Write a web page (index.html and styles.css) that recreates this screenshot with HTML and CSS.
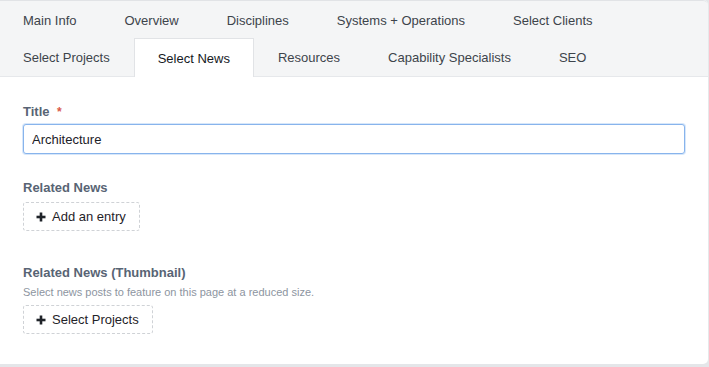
FILE: index.html
```html
<!DOCTYPE html>
<html>
<head>
<meta charset="utf-8">
<link rel="stylesheet" href="styles.css">
</head>
<body>
<div class="card">
  <nav class="tabs">
    <div class="tab-row">
      <a class="tab">Main Info</a>
      <a class="tab">Overview</a>
      <a class="tab">Disciplines</a>
      <a class="tab">Systems + Operations</a>
      <a class="tab">Select Clients</a>
    </div>
    <div class="tab-row">
      <a class="tab">Select Projects</a>
      <a class="tab active">Select News</a>
      <a class="tab">Resources</a>
      <a class="tab">Capability Specialists</a>
      <a class="tab">SEO</a>
    </div>
  </nav>
  <div class="content">
    <div class="field field-title">
      <label class="label">Title <span class="req">*</span></label>
      <input class="text-input" type="text" value="Architecture">
    </div>
    <div class="field field-news">
      <label class="label">Related News</label>
      <button class="add-btn"><svg class="plus" width="10" height="10" viewBox="0 0 10 10"><rect x="3.7" y="0.5" width="2.6" height="9" fill="#1f2329"/><rect x="0.5" y="3.7" width="9" height="2.6" fill="#1f2329"/></svg>Add an entry</button>
    </div>
    <div class="field field-thumb">
      <label class="label">Related News (Thumbnail)</label>
      <p class="instructions">Select news posts to feature on this page at a reduced size.</p>
      <button class="add-btn"><svg class="plus" width="10" height="10" viewBox="0 0 10 10"><rect x="3.7" y="0.5" width="2.6" height="9" fill="#1f2329"/><rect x="0.5" y="3.7" width="9" height="2.6" fill="#1f2329"/></svg>Select Projects</button>
    </div>
  </div>
</div>
</body>
</html>
```
FILE: styles.css
```css
* { box-sizing: border-box; }
html, body { margin: 0; padding: 0; }
body {
  background: #e4e6e9;
  font-family: "Liberation Sans", Arial, sans-serif;
  font-size: 13px;
  color: #29323d;
  width: 709px;
  height: 367px;
  overflow: hidden;
}
.card {
  width: 708px;
  height: 364px;
  background: #fff;
  border-radius: 0 5px 5px 0;
  overflow: hidden;
  box-shadow: 1px 0 0 #e6e8ea;
}
.tabs {
  background: #f4f5f6;
  border-top: 1px solid #e1e3e6;
  border-bottom: 1px solid #e6e8eb;
  border-radius: 0 5px 0 0;
}
.tab-row {
  display: flex;
  height: 37px;
}
.tab-row + .tab-row { height: 38px; }
.tab {
  display: flex;
  align-items: center;
  padding: 0 23px;
  border: 1px solid transparent;
  border-bottom: 0;
  color: #3d444b;
  white-space: nowrap;
}
.tab:first-child { padding-left: 22px; }
.tab.active {
  background: #fff;
  border-color: #e1e3e6;
  color: #15191e;
  height: 39px;
  position: relative;
  z-index: 1;
}
.content {
  padding: 26px 23px 0 23px;
}
.label {
  display: block;
  font-weight: bold;
  color: #586474;
  line-height: 18px;
}
.req {
  color: #d9594a;
  margin-left: 4px;
  font-size: 12px;
}
.field-title .label { margin-bottom: 3px; }
.text-input {
  display: block;
  width: 100%;
  height: 30px;
  border: 1px solid #88b4ec;
  border-radius: 3px;
  box-shadow: 0 0 0 1px rgba(140, 185, 240, 0.35);
  padding: 0 8px;
  font-family: inherit;
  font-size: 13px;
  color: #1c2128;
  outline: none;
}
.field-news { margin-top: 25px; }
.field-news .label { margin-bottom: 5px; }
.field-thumb { margin-top: 33px; }
.instructions {
  margin: 3px 0 5px 0;
  font-size: 11px;
  line-height: 15px;
  color: #8d959f;
}
.add-btn {
  display: inline-flex;
  align-items: center;
  height: 29px;
  padding: 0 13px 0 12px;
  background: #fff;
  border: 1px dashed #cfd2d6;
  border-radius: 3px;
  font-family: inherit;
  font-size: 13px;
  color: #1f2329;
}
.plus { margin-right: 6px; }
```
